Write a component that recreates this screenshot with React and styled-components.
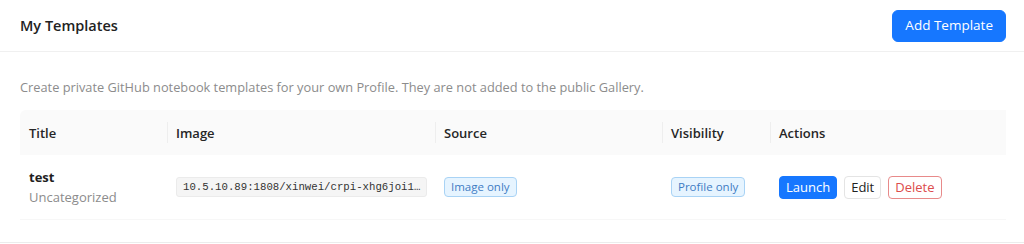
import React from 'react';
import styled, { createGlobalStyle } from 'styled-components';

const GlobalStyle = createGlobalStyle`
  body {
    margin: 0;
    background: #fff;
    font-family: "Open Sans", "Noto Sans", sans-serif;
    color: #1f1f1f;
  }
`;

const Page = styled.div`
  width: 1024px;
  height: 243px;
  border-bottom: 1px solid #ececec;
  box-sizing: border-box;
`;

const Header = styled.header`
  height: 52px;
  display: flex;
  align-items: center;
  justify-content: space-between;
  padding: 0 18px 0 20px;
  border-bottom: 1px solid #f0f0f0;
  box-sizing: border-box;
`;

const Title = styled.h1`
  margin: 0;
  font-size: 14.5px;
  font-weight: 600;
  color: #222;
`;

const Button = styled.button`
  font-family: inherit;
  cursor: pointer;
  border-radius: ${(p) => (p.$size === 'lg' ? '6px' : '4px')};
  height: ${(p) => (p.$size === 'lg' ? '32px' : '23px')};
  padding: ${(p) => (p.$size === 'lg' ? '0 12px' : '0 6px')};
  font-size: ${(p) => (p.$size === 'lg' ? '13.5px' : '13px')};
  line-height: 1;
  border: 1px solid ${(p) => (p.$variant === 'primary' ? '#1677ff' : p.$variant === 'danger' ? '#e88a8a' : '#e4e4e4')};
  background: ${(p) => (p.$variant === 'primary' ? '#1677ff' : '#fff')};
  color: ${(p) => (p.$variant === 'primary' ? '#fff' : p.$variant === 'danger' ? '#dc4c4c' : '#222')};
`;

const Body = styled.div`
  padding: 26px 18px 0 20px;
`;

const Description = styled.p`
  margin: 0 0 14px;
  font-size: 12.8px;
  color: #8c8c8c;
  line-height: 18px;
`;

const Table = styled.div`
  display: grid;
  grid-template-columns: 147px 268px 227px 108px 236px;
`;

const HeadCell = styled.div`
  position: relative;
  height: 45px;
  display: flex;
  align-items: center;
  padding: 0 9px;
  background: #fafafa;
  font-size: 13px;
  font-weight: 600;
  color: #262626;
  &:first-child { border-top-left-radius: 6px; }
  &:last-child { border-top-right-radius: 6px; }
  & + &::before {
    content: '';
    position: absolute;
    left: 0;
    top: 12px;
    bottom: 12px;
    width: 1px;
    background: #eeeeee;
  }
`;

const Cell = styled.div`
  height: 64px;
  display: flex;
  flex-direction: ${(p) => (p.$stack ? 'column' : 'row')};
  justify-content: ${(p) => (p.$stack ? 'center' : 'flex-start')};
  align-items: ${(p) => (p.$stack ? 'flex-start' : 'center')};
  gap: ${(p) => (p.$stack ? '2px' : '7px')};
  padding: 0 9px;
  border-bottom: 1px solid #f7f7f7;
`;

const Name = styled.div`
  font-size: 13px;
  font-weight: 700;
  color: #1f1f1f;
`;

const Category = styled.div`
  font-size: 13px;
  color: #8c8c8c;
`;

const Code = styled.code`
  display: inline-block;
  font-family: "Liberation Mono", "DejaVu Sans Mono", monospace;
  font-size: 10.7px;
  line-height: 16px;
  padding: 1px 6px;
  background: #f5f5f5;
  border: 1px solid #ebebeb;
  border-radius: 3px;
  color: #333;
  white-space: nowrap;
`;

const Badge = styled.span`
  display: inline-block;
  font-size: 11.5px;
  line-height: 18px;
  padding: 0 6px;
  background: #e6f4ff;
  border: 1px solid #a9d3f5;
  border-radius: 4px;
  color: #3f7cc4;
`;

export default function App() {
  return (
    <Page>
      <GlobalStyle />
      <Header>
        <Title>My Templates</Title>
        <Button $variant="primary" $size="lg">Add Template</Button>
      </Header>
      <Body>
        <Description>
          Create private GitHub notebook templates for your own Profile. They are not added to the public Gallery.
        </Description>
        <Table>
          <HeadCell>Title</HeadCell>
          <HeadCell>Image</HeadCell>
          <HeadCell>Source</HeadCell>
          <HeadCell>Visibility</HeadCell>
          <HeadCell>Actions</HeadCell>

          <Cell $stack>
            <Name>test</Name>
            <Category>Uncategorized</Category>
          </Cell>
          <Cell>
            <Code>10.5.10.89:1808/xinwei/crpi-xhg6joi1…</Code>
          </Cell>
          <Cell>
            <Badge>Image only</Badge>
          </Cell>
          <Cell>
            <Badge>Profile only</Badge>
          </Cell>
          <Cell>
            <Button $variant="primary">Launch</Button>
            <Button>Edit</Button>
            <Button $variant="danger">Delete</Button>
          </Cell>
        </Table>
      </Body>
    </Page>
  );
}
